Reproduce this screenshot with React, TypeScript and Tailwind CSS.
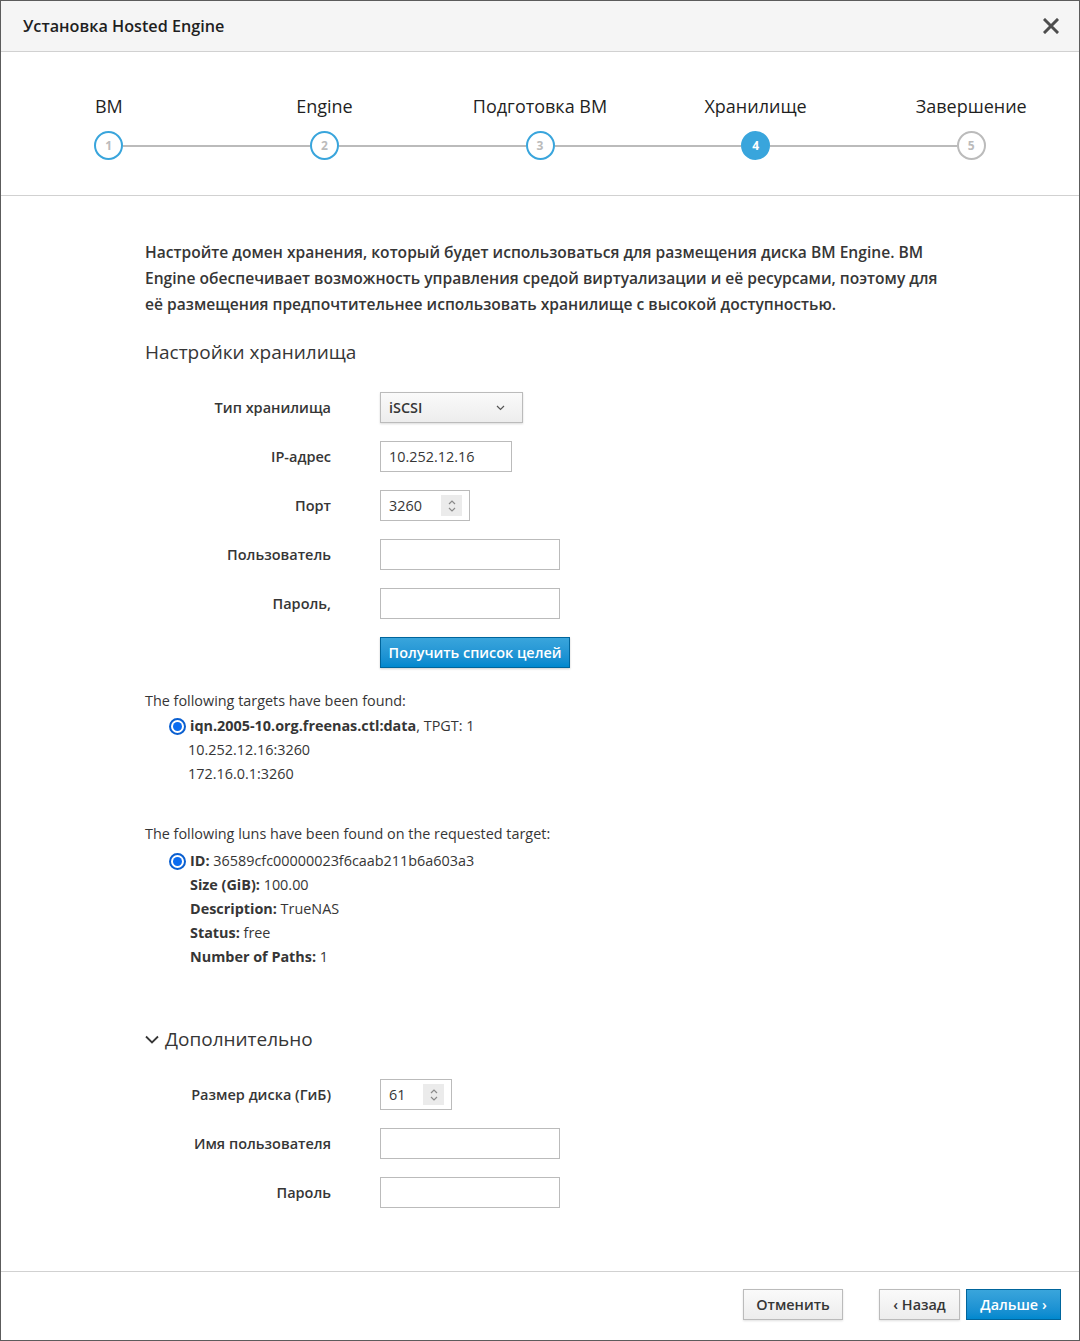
import React from "react";

const STEPS = ["ВМ", "Engine", "Подготовка ВМ", "Хранилище", "Завершение"];
const ACTIVE_STEP = 3;

const font = { fontFamily: '"Open Sans", "Noto Sans", sans-serif' };

function Stepper() {
  return (
    <div className="grid grid-cols-5 h-[144px] border-b border-[#d1d1d1] pt-[42px]">
      {STEPS.map((label, i) => {
        const active = i === ACTIVE_STEP;
        const done = i < ACTIVE_STEP;
        return (
          <div key={label} className="flex flex-col items-center">
            <div className="text-[18px] leading-[24px] text-[#1f1f1f] whitespace-nowrap">{label}</div>
            <div className="flex items-center w-full mt-[13px]">
              <div className={`flex-1 h-[2px] ${i === 0 ? "bg-transparent" : "bg-[#bbbbbb]"}`} />
              <div
                className={`w-[29px] h-[29px] rounded-full border-[2px] flex items-center justify-center text-[12px] font-bold ${
                  active
                    ? "bg-[#39a5dc] border-[#39a5dc] text-white"
                    : done
                    ? "bg-white border-[#39a5dc] text-[#bbbbbb]"
                    : "bg-white border-[#bbbbbb] text-[#bbbbbb]"
                }`}
              >
                {i + 1}
              </div>
              <div className={`flex-1 h-[2px] ${i === STEPS.length - 1 ? "bg-transparent" : "bg-[#bbbbbb]"}`} />
            </div>
          </div>
        );
      })}
    </div>
  );
}

function Row({ label, children }: { label: string; children: React.ReactNode }) {
  return (
    <div className="flex items-center h-[31px]">
      <div className="w-[186px] text-right text-[14.5px] font-semibold text-[#363636] whitespace-nowrap">{label}</div>
      <div className="ml-[49px] flex">{children}</div>
    </div>
  );
}

function TextInput({ value = "", width }: { value?: string; width: string }) {
  return (
    <div className={`${width} h-[31px] border border-[#bbbbbb] bg-white flex items-center px-[8px] text-[14.4px] text-[#363636]`}>
      {value}
    </div>
  );
}

function Spinner({ value, width }: { value: string; width: string }) {
  return (
    <div className={`${width} h-[31px] border border-[#bbbbbb] bg-white flex items-center pl-[8px] pr-[7px] text-[14.4px] text-[#363636]`}>
      <span className="flex-1">{value}</span>
      <span className="w-[21px] h-[21px] bg-[#ebebeb] flex items-center justify-center">
        <svg width="10" height="16" viewBox="0 0 10 16" fill="none" stroke="#8a8a8a" strokeWidth="1.2">
          <path d="M2 6l3-3 3 3M2 10l3 3 3-3" />
        </svg>
      </span>
    </div>
  );
}

function Radio() {
  return (
    <span className="w-[17px] h-[17px] rounded-full border-[2px] border-[#0a5fd0] bg-white flex items-center justify-center shrink-0">
      <span className="w-[9px] h-[9px] rounded-full bg-[#0b6cf0]" />
    </span>
  );
}

function GrayButton({ children, className = "" }: { children: React.ReactNode; className?: string }) {
  return (
    <button
      type="button"
      className={`h-[31px] border border-[#bbbbbb] bg-gradient-to-b from-[#fafafa] to-[#ededed] shadow-[0_1px_2px_rgba(0,0,0,0.12)] text-[14.4px] font-semibold text-[#363636] ${className}`}
    >
      {children}
    </button>
  );
}

export default function App() {
  return (
    <div style={font} className="w-[1080px] h-[1341px] border border-[#5c5c5c] bg-white flex flex-col text-[#363636]">
      {/* header */}
      <div className="h-[51px] shrink-0 bg-[#f5f5f5] border-b border-[#d1d1d1] flex items-center justify-between pl-[22px] pr-[20px]">
        <h1 className="text-[16.2px] font-semibold text-[#1f1f1f]">Установка Hosted Engine</h1>
        <svg width="16" height="16" viewBox="0 0 16 16" stroke="#4d4d4d" strokeWidth="3" strokeLinecap="square">
          <path d="M2 2l12 12M14 2L2 14" />
        </svg>
      </div>

      <Stepper />

      {/* body */}
      <div className="flex-1 pl-[144px] pt-[43px]">
        <p className="w-[810px] text-[15.6px] leading-[26px] font-semibold text-[#363636]">
          Настройте домен хранения, который будет использоваться для размещения диска ВМ Engine. ВМ Engine
          обеспечивает возможность управления средой виртуализации и её ресурсами, поэтому для её размещения
          предпочтительнее использовать хранилище с высокой доступностью.
        </p>

        <h2 className="mt-[22px] text-[19px] leading-[26px] text-[#363636]">Настройки хранилища</h2>

        <div className="mt-[27px] flex flex-col gap-[18px]">
          <Row label="Тип хранилища">
            <div className="w-[143px] h-[31px] border border-[#bbbbbb] bg-gradient-to-b from-[#fafafa] to-[#ededed] shadow-[0_1px_2px_rgba(0,0,0,0.15)] flex items-center justify-between pl-[8px] pr-[17px] text-[14.4px] font-semibold text-[#363636]">
              <span>iSCSI</span>
              <svg width="9" height="6" viewBox="0 0 9 6" fill="none" stroke="#555" strokeWidth="1.2">
                <path d="M1 1l3.5 3.5L8 1" />
              </svg>
            </div>
          </Row>
          <Row label="IP-адрес">
            <TextInput value="10.252.12.16" width="w-[132px]" />
          </Row>
          <Row label="Порт">
            <Spinner value="3260" width="w-[90px]" />
          </Row>
          <Row label="Пользователь">
            <TextInput width="w-[180px]" />
          </Row>
          <Row label="Пароль,">
            <TextInput width="w-[180px]" />
          </Row>
          <Row label="">
            <button
              type="button"
              className="h-[31px] w-[190px] border border-[#00659c] bg-gradient-to-b from-[#39a5dc] to-[#0088ce] shadow-[0_1px_2px_rgba(0,0,0,0.2)] text-white text-[14.4px] font-semibold whitespace-nowrap"
            >
              Получить список целей
            </button>
          </Row>
        </div>

        {/* discovered targets */}
        <div className="mt-[21px] text-[14.4px] leading-[24px]">
          <div>The following targets have been found:</div>
          <div className="flex items-center pl-[24px] gap-[4px] mt-[1px]">
            <Radio />
            <span>
              <b className="font-bold">iqn.2005-10.org.freenas.ctl:data</b>, TPGT: 1
            </span>
          </div>
          <div className="pl-[43px]">10.252.12.16:3260</div>
          <div className="pl-[43px]">172.16.0.1:3260</div>
        </div>

        {/* luns */}
        <div className="mt-[36px] text-[14.4px] leading-[24px]">
          <div>The following luns have been found on the requested target:</div>
          <div className="flex items-center pl-[24px] gap-[4px] mt-[3px]">
            <Radio />
            <span>
              <b className="font-bold">ID:</b> 36589cfc00000023f6caab211b6a603a3
            </span>
          </div>
          <div className="pl-[45px]">
            <b className="font-bold">Size (GiB):</b> 100.00
          </div>
          <div className="pl-[45px]">
            <b className="font-bold">Description:</b> TrueNAS
          </div>
          <div className="pl-[45px]">
            <b className="font-bold">Status:</b> free
          </div>
          <div className="pl-[45px]">
            <b className="font-bold">Number of Paths:</b> 1
          </div>
        </div>

        {/* advanced */}
        <div className="mt-[57px] flex items-center gap-[6px] text-[19px] leading-[26px]">
          <svg width="14" height="9" viewBox="0 0 14 9" fill="none" stroke="#363636" strokeWidth="1.8">
            <path d="M1 1.5l6 6 6-6" />
          </svg>
          <span>Дополнительно</span>
        </div>

        <div className="mt-[27px] flex flex-col gap-[18px]">
          <Row label="Размер диска (ГиБ)">
            <Spinner value="61" width="w-[72px]" />
          </Row>
          <Row label="Имя пользователя">
            <TextInput width="w-[180px]" />
          </Row>
          <Row label="Пароль">
            <TextInput width="w-[180px]" />
          </Row>
        </div>
      </div>

      {/* footer */}
      <div className="h-[69px] shrink-0 border-t border-[#d1d1d1] flex items-start justify-end pt-[17px] pr-[18px]">
        <GrayButton className="w-[100px]">Отменить</GrayButton>
        <GrayButton className="w-[81px] ml-[36px]">‹ Назад</GrayButton>
        <button
          type="button"
          className="w-[95px] h-[31px] ml-[6px] border border-[#00659c] bg-gradient-to-b from-[#39a5dc] to-[#0088ce] text-white text-[14.4px] font-semibold"
        >
          Дальше ›
        </button>
      </div>
    </div>
  );
}
